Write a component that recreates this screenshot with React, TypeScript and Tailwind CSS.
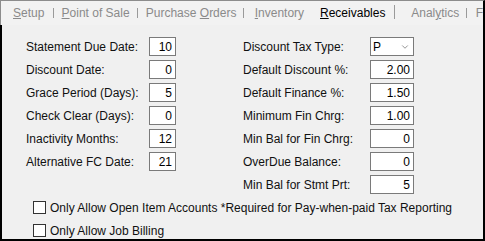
import { ChevronDown } from "lucide-react"

const leftRows = [
    { label: "Statement Due Date:", value: "10" },
    { label: "Discount Date:", value: "0" },
    { label: "Grace Period (Days):", value: "5" },
    { label: "Check Clear (Days):", value: "0" },
    { label: "Inactivity Months:", value: "12" },
    { label: "Alternative FC Date:", value: "21" },
]

const rightRows = [
    { label: "Default Discount %:", value: "2.00" },
    { label: "Default Finance %:", value: "1.50" },
    { label: "Minimum Fin Chrg:", value: "1.00" },
    { label: "Min Bal for Fin Chrg:", value: "0" },
    { label: "OverDue Balance:", value: "0" },
    { label: "Min Bal for Stmt Prt:", value: "5" },
]

function Sep({ tall }: { tall?: boolean }) {
    return <span className={tall ? "w-px h-[14px] bg-[#9a9a9a] self-end mb-[6px]" : "w-px h-[10px] bg-[#9a9a9a]"} />
}

function Field({ value, wide }: { value: string; wide?: boolean }) {
    return (
        <div
            className={`${wide ? "w-[44px]" : "w-[27px]"} h-[19px] bg-white border border-[#7a7a7a] flex items-center justify-end pr-[3px] text-black`}
        >
            {value}
        </div>
    )
}

function Check({ label }: { label: string }) {
    return (
        <div className="h-[19px] flex items-center">
            <span className="ml-[7px] w-[13px] h-[13px] bg-white border border-[#333333]" />
            <span className="ml-[4px] text-[#111]">{label}</span>
        </div>
    )
}

export default function App() {
    return (
        <div
            className="w-[485px] h-[241px] bg-[#f0f0f0] border-t border-t-[#8c8c8c] border-r-2 border-r-black border-b-2 border-b-black flex flex-col text-[12px] leading-none overflow-hidden"
            style={{ fontFamily: '"Liberation Sans", Arial, sans-serif' }}
        >
            {/* Tab strip */}
            <div className="h-[24px] shrink-0 border-l border-l-[#8c8c8c] pl-[12px] flex items-center whitespace-nowrap text-[#8a8a8a] bg-[#f2f2f2]">
                <span className="w-[40px]"><u>S</u>etup</span>
                <Sep />
                <span className="ml-[8px] w-[76px]"><u>P</u>oint of Sale</span>
                <Sep />
                <span className="ml-[8px] w-[98px]">Purchase <u>O</u>rders</span>
                <Sep />
                <span className="ml-[11px] w-[66px]"><u>I</u>nventory</span>
                <span className="w-[75px] text-black"><u>R</u>eceivables</span>
                <Sep tall />
                <span className="ml-[16px] w-[55px]">Anal<u>y</u>tics</span>
                <Sep />
                <span className="ml-[9px]">F</span>
            </div>

            {/* Panel */}
            <div className="flex-1 border-l-2 border-l-black pl-[24px] pt-[12px] text-[#111]">
                <div className="flex">
                    <div className="w-[217px] flex flex-col gap-[4px]">
                        {leftRows.map((r) => (
                            <div key={r.label} className="h-[19px] flex items-center">
                                <span className="w-[123px]">{r.label}</span>
                                <Field value={r.value} />
                            </div>
                        ))}
                    </div>
                    <div className="flex flex-col gap-[4px]">
                        <div className="h-[19px] flex items-center">
                            <span className="w-[127px]">Discount Tax Type:</span>
                            <div className="w-[44px] h-[19px] bg-white border border-[#7a7a7a] flex items-center justify-between pl-[2px] pr-[3px] text-black">
                                <span>P</span>
                                <ChevronDown className="w-[10px] h-[10px] text-[#555]" strokeWidth={1.5} />
                            </div>
                        </div>
                        {rightRows.map((r) => (
                            <div key={r.label} className="h-[19px] flex items-center">
                                <span className="w-[127px]">{r.label}</span>
                                <Field value={r.value} wide />
                            </div>
                        ))}
                    </div>
                </div>
                <div className="mt-[4px] flex flex-col gap-[4px]">
                    <Check label="Only Allow Open Item Accounts *Required for Pay-when-paid Tax Reporting" />
                    <Check label="Only Allow Job Billing" />
                </div>
            </div>
        </div>
    )
}
